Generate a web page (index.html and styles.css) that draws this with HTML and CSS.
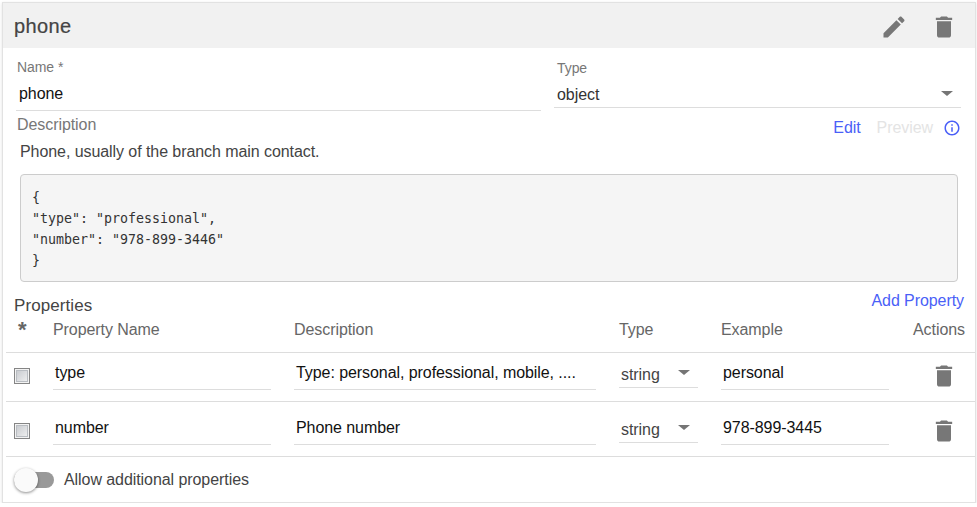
FILE: index.html
```html
<!DOCTYPE html>
<html lang="en">
<head>
<meta charset="utf-8">
<title>phone</title>
<link rel="stylesheet" href="styles.css">
</head>
<body>
<svg width="0" height="0" class="defs">
  <symbol id="trash" viewBox="0 0 24 24"><path d="M6 19c0 1.1.9 2 2 2h8c1.1 0 2-.9 2-2V7H6v12zM19 4h-3.5l-1-1h-5l-1 1H5v2h14V4z"/></symbol>
  <symbol id="pencil" viewBox="0 0 24 24"><path d="M3 17.25V21h3.75L17.81 9.94l-3.75-3.75L3 17.25zM20.71 7.04c.39-.39.39-1.02 0-1.41l-2.34-2.34c-.39-.39-1.02-.39-1.41 0l-1.83 1.83 3.75 3.75 1.83-1.83z"/></symbol>
  <symbol id="info" viewBox="0 0 24 24"><path d="M11 17h2v-6h-2v6zm1-15C6.48 2 2 6.48 2 12s4.48 10 10 10 10-4.48 10-10S17.52 2 12 2zm0 18c-4.41 0-8-3.59-8-8s3.59-8 8-8 8 3.59 8 8-3.59 8-8 8zM11 9h2V7h-2v2z"/></symbol>
</svg>
<main class="card">
  <header class="head">
    <h1>phone</h1>
    <svg class="icon edit"><use href="#pencil"/></svg>
    <svg class="icon"><use href="#trash"/></svg>
  </header>
  <section class="fields">
    <div class="field name"><label>Name *</label><span class="value">phone</span></div>
    <div class="field kind"><label>Type</label><span class="value">object<i class="caret"></i></span></div>
  </section>
  <section class="desc">
    <div class="desc-bar">
      <span class="label">Description</span>
      <a class="link">Edit</a><span class="off">Preview</span>
      <svg class="info"><use href="#info"/></svg>
    </div>
    <p>Phone, usually of the branch main contact.</p>
    <pre>{
"type": "professional",
"number": "978-899-3446"
}</pre>
  </section>
  <section class="props">
    <div class="props-bar"><h2>Properties</h2><a class="link">Add Property</a></div>
    <div class="row titles"><b>*</b><span>Property Name</span><span>Description</span><span>Type</span><span>Example</span><span class="actions">Actions</span></div>
    <div class="row item first">
      <i class="box"></i><span class="input">type</span><span class="input">Type: personal, professional, mobile, ....</span>
      <span class="select">string<i class="caret"></i></span><span class="input">personal</span><svg class="icon"><use href="#trash"/></svg>
    </div>
    <div class="row item">
      <i class="box"></i><span class="input">number</span><span class="input">Phone number</span>
      <span class="select">string<i class="caret"></i></span><span class="input">978-899-3445</span><svg class="icon"><use href="#trash"/></svg>
    </div>
  </section>
  <footer class="foot"><span class="switch"><i></i></span><span>Allow additional properties</span></footer>
</main>
</body>
</html>
```
FILE: styles.css
```css
* { box-sizing: border-box; }
body { margin: 0; padding: 2px 0 0 2px; background: #fff; font: 16px/20px "Liberation Sans", Arial, sans-serif; letter-spacing: -.07px; color: #444; overflow: hidden; }
.defs { display: block; position: absolute; }
h1, h2, p, pre { margin: 0; font-weight: normal; }
.card { width: 974px; height: 501px; border: 1px solid #e2e2e2; box-shadow: 0 1px 3px rgba(0,0,0,.12); }
.head { display: flex; align-items: center; height: 45px; padding: 0 17px 0 11px; background: #f1f1f1; }
h1 { flex: 1; font-size: 20px; line-height: 24px; letter-spacing: .4px; padding-top: 1px; -webkit-text-stroke: .2px; }
.icon { display: block; width: 28px; height: 28px; fill: #777; margin-top: 3px; }
.edit { margin-right: 22px; }
.fields { display: grid; grid-template-columns: 525px 407px; column-gap: 13px; height: 65px; padding: 10px 0 0 13px; align-items: start; }
.field { border-bottom: 1px solid #ddd; }
.field label { display: block; height: 20px; font-size: 14px; line-height: 18px; color: #777; padding-left: 1px; }
.name { height: 53px; }
.kind { height: 50px; }
.kind label { padding: 1px 0 0 3px; }
.value { display: flex; justify-content: space-between; align-items: center; padding: 6px 8px 0 3px; color: #111; }
.kind .value { padding-top: 7px; color: #333; }
.caret { width: 0; height: 0; border: 6px solid transparent; border-top: 5px solid #757575; border-bottom: 0; }
.kind .caret { margin-top: -3px; }
.desc { padding: 2px 17px 0; }
.desc-bar { display: flex; align-items: center; height: 24px; padding: 2px 2px 0 0; margin-right: -5px; }
.label { flex: 1; color: #777; margin: -7px 0 0 -3px; }
.link { color: #4a5ff7; }
.desc-bar .link { margin-right: 16px; }
.off { color: #e4e4e4; margin-right: 10px; }
.info { width: 18px; height: 18px; fill: #4a5ff7; }
.desc p { padding-top: 3px; height: 35px; }
pre { height: 108px; padding: 12px 11px; border: 1px solid #ccc; border-radius: 4px; background: #f5f5f5; font: 13.3px/21px "DejaVu Sans Mono", monospace; letter-spacing: 0; color: #333; }
.props-bar { display: flex; justify-content: space-between; height: 37px; padding: 9px 11px 0 11px; }
.props-bar h2 { font-size: 17px; line-height: 20px; padding-top: 5px; letter-spacing: .08px; }
.row { display: grid; grid-template-columns: 25px 218px 302px 79px 168px 1fr; column-gap: 23px; margin-left: 3px; padding-right: 11px; border-bottom: 1px solid #ddd; }
.row > :nth-child(n+2) { position: relative; left: -1px; }
.titles { height: 34px; padding-top: 1px; color: #666; }
.titles b { padding-left: 12px; font-size: 22px; line-height: 20px; }
.row > .actions { text-align: right; left: 0; }
.item { height: 55px; align-items: start; padding-top: 12px; }
.item.first { height: 49px; padding-top: 6px; }
.item .input { height: 31px; padding: 4px 2px 0; border-bottom: 1px solid #ddd; color: #111; white-space: nowrap; }
.select { display: flex; justify-content: space-between; height: 29px; padding: 6px 8px 0 2px; border-bottom: 1px solid #ddd; }
.select .caret { margin-top: 5px; }
.item .icon { justify-self: end; margin: 3px 5px 0 0; }
.box { width: 16px; height: 16px; margin: 9px 0 0 8px; border: 1px solid #858585; background: linear-gradient(135deg, #c3c6cb, #f4f4f4); box-shadow: inset 0 0 0 1px #f3f3f3, inset 0 0 0 2px #b9bdc2; }
.foot { display: flex; align-items: center; height: 45px; padding-left: 11px; }
.foot > span:last-child { margin-left: 10px; }
.switch { width: 40px; height: 16px; border-radius: 8px; background: #999; display: flex; align-items: center; }
.switch i { width: 24px; height: 24px; flex: none; border-radius: 50%; background: #fafafa; box-shadow: 0 1px 3px rgba(0,0,0,.45); }
```
